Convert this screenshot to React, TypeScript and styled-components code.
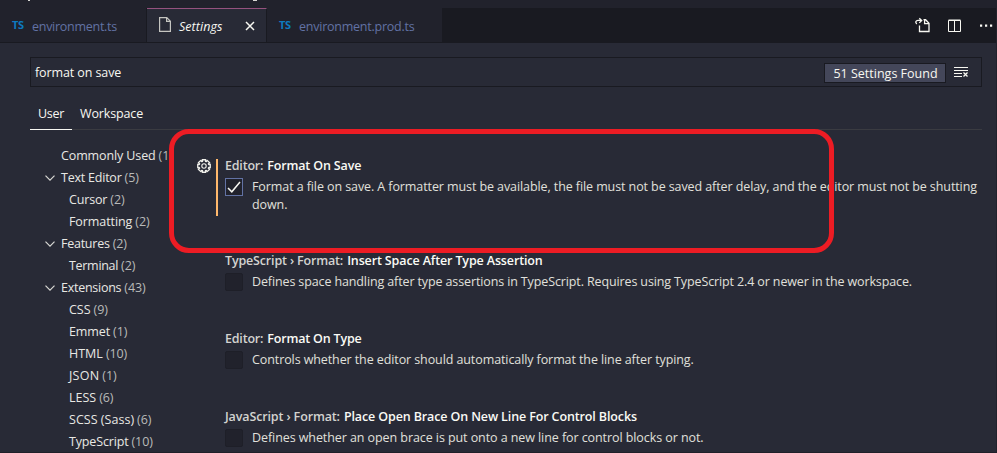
import React from "react";
import styled, { createGlobalStyle, css } from "styled-components";

const GlobalStyle = createGlobalStyle`
  * { box-sizing: border-box; }
  body { margin: 0; background: #282a36; overflow: hidden; }
`;

const Window = styled.div`
  position: relative;
  display: flex;
  flex-direction: column;
  width: 997px;
  height: 453px;
  overflow: hidden;
  background: #282a36;
  border-right: 1px solid #21222c;
  border-bottom: 1px solid #1f2029;
  color: #f8f8f2;
  font: 12.5px/18px "Open Sans", "Noto Sans", sans-serif;
  font-kerning: normal;
`;

const Label = styled.span<{ $track?: number }>`
  letter-spacing: ${(p) => p.$track ?? -0.12}px;
  white-space: nowrap;
`;

const TitleBar = styled.header`
  display: flex;
  height: 8px;
  padding-left: 28px;
  background: #21222c;
`;

const MenuDescender = styled.i<{ $width: number; $gap?: number }>`
  width: ${(p) => p.$width}px;
  height: 1px;
  margin-left: ${(p) => p.$gap ?? 0}px;
  background: #d8d8d4;
`;

const TabBar = styled.nav`
  display: flex;
  height: 35px;
  background: #191a21;
`;

const Tab = styled.div<{ $width: number; $active?: boolean; $last?: boolean }>`
  display: flex;
  align-items: center;
  width: ${(p) => p.$width}px;
  padding: 4px 0 0 12px;
  border-right: ${(p) => (p.$last ? 0 : 1)}px solid #191a21;
  border-bottom: 1px solid #191a21;
  background: #21222c;
  color: #6272a4;
  ${(p) =>
    p.$active &&
    css`
      padding-top: 3px;
      border-top: 1px solid #94527e;
      background: #282a36;
      color: #f8f8f2;
      font-style: italic;
    `}
`;

const TsBadge = styled.span`
  width: 20px;
  margin-top: -4px;
  color: #0d7ac0;
  font: 700 11px/12px "Open Sans", sans-serif;
  letter-spacing: -0.4px;
`;

const FileIcon = styled.svg`
  width: 12px;
  height: 15px;
  margin: -5px 8px 0 0;
`;

const CloseIcon = styled.svg`
  width: 10px;
  height: 10px;
  margin: -3px 0 0 auto;
`;

const ActiveInner = styled.div`
  display: flex;
  flex: 1;
  align-items: center;
  padding-right: 11px;
`;

const Actions = styled.div`
  display: flex;
  align-items: center;
  gap: 18px;
  margin-left: auto;
  padding-right: 3px;
`;

const Icon = styled.svg`
  display: block;
  flex: none;
  overflow: visible;
`;

const SearchBox = styled.div`
  display: flex;
  align-items: center;
  height: 30px;
  margin: 14px 14px 0 30px;
  padding: 2px 12px 0 4px;
  border: 1px solid #191a21;
`;

const Count = styled.div`
  display: flex;
  align-items: center;
  justify-content: center;
  width: 122px;
  height: 20px;
  margin: 0 8px 0 auto;
  padding: 2px 0 0 1px;
  border: 1px solid #191a21;
  background: #44475a;
`;

const ClearIcon = styled(Icon)`
  margin-top: -3px;
`;

const ScopeTabs = styled.div`
  display: flex;
  height: 30px;
  margin: 13px 14px 0 30px;
  border-bottom: 1px solid #3a3b41;
`;

const ScopeTab = styled.div<{ $active?: boolean }>`
  height: 30px;
  padding: 5px 8px 0;
  border-bottom: 1px solid ${(p) => (p.$active ? "#f8f8f2" : "transparent")};
`;

const Body = styled.main`
  display: flex;
  flex: 1;
  min-height: 0;
`;

const Tree = styled.aside`
  width: 172px;
  padding-top: 14px;
  overflow: hidden;
`;

const TreeRow = styled.div<{ $child?: boolean }>`
  display: flex;
  align-items: center;
  height: 22px;
  padding: 1px 0 0 ${(p) => (p.$child ? 69 : 45)}px;
  color: #e8e8e4;
`;

const Twistie = styled.span`
  display: flex;
  flex: none;
  width: 16px;
`;

const TreeCount = styled.span`
  padding-left: 3px;
  color: #b9bab9;
  letter-spacing: -0.1px;
`;

const List = styled.section`
  flex: 1;
  padding: 29px 0 0 24px;
`;

const Setting = styled.article<{ $height: number }>`
  display: grid;
  grid-template-columns: 20px 9px 760px;
  height: ${(p) => p.$height}px;
`;

const GearCell = styled.div`
  padding-left: 1px;
`;

const ModifiedBar = styled.div<{ $on?: boolean }>`
  width: 2px;
  height: 57px;
  background: ${(p) => (p.$on ? "#ffb86c" : "transparent")};
`;

const Heading = styled.h3`
  display: flex;
  gap: 4px;
  margin: -2px 0 0;
  height: 21px;
  font-size: 12.5px;
  font-weight: 600;
  line-height: 18px;
  color: #fafaf5;
`;

const Category = styled(Label)`
  color: #d3d3d0;
`;

const Option = styled.div`
  display: flex;
  gap: 9px;
`;

const Check = styled.span<{ $checked?: boolean }>`
  display: flex;
  align-items: center;
  justify-content: center;
  flex: none;
  width: 18px;
  height: 18px;
  border: 1px solid ${(p) => (p.$checked ? "#6272a4" : "#1e1f28")};
  border-radius: ${(p) => (p.$checked ? 0 : 2)}px;
  background: #21222c;
`;

const Description = styled.p`
  display: flex;
  flex-direction: column;
  margin: 0;
  color: #e0e0dc;
`;

const Highlight = styled.div`
  position: absolute;
  left: 169px;
  top: 129px;
  width: 665px;
  height: 124px;
  border: 5px solid #ed1c24;
  border-radius: 20px;
`;

type TreeItem = [name: string, count: string, track: number, kind: "top" | "open" | "child"];

const tree: TreeItem[] = [
  ["Commonly Used", "(1", -0.12, "top"],
  ["Text Editor", "(5)", -0.22, "open"],
  ["Cursor", "(2)", -0.15, "child"],
  ["Formatting", "(2)", -0.08, "child"],
  ["Features", "(2)", -0.25, "open"],
  ["Terminal", "(2)", -0.3, "child"],
  ["Extensions", "(43)", -0.26, "open"],
  ["CSS", "(9)", 0, "child"],
  ["Emmet", "(1)", -0.1, "child"],
  ["HTML", "(10)", 0, "child"],
  ["JSON", "(1)", 0.25, "child"],
  ["LESS", "(6)", 0, "child"],
  ["SCSS (Sass)", "(6)", 0.03, "child"],
  ["TypeScript", "(10)", -0.15, "child"],
];

interface SettingData {
  category: string;
  name: string;
  lines: string[];
  height: number;
  tracks: [number, number, number];
  checked?: boolean;
}

const settings: SettingData[] = [
  {
    category: "Editor:",
    name: "Format On Save",
    lines: [
      "Format a file on save. A formatter must be available, the file must not be saved after delay, and the editor must not be shutting",
      "down.",
    ],
    height: 95,
    tracks: [-0.2, -0.15, -0.091],
    checked: true,
  },
  {
    category: "TypeScript › Format:",
    name: "Insert Space After Type Assertion",
    lines: [
      "Defines space handling after type assertions in TypeScript. Requires using TypeScript 2.4 or newer in the workspace.",
    ],
    height: 78,
    tracks: [-0.16, -0.13, -0.123],
  },
  {
    category: "Editor:",
    name: "Format On Type",
    lines: ["Controls whether the editor should automatically format the line after typing."],
    height: 78,
    tracks: [-0.2, -0.18, -0.095],
  },
  {
    category: "JavaScript › Format:",
    name: "Place Open Brace On New Line For Control Blocks",
    lines: ["Defines whether an open brace is put onto a new line for control blocks or not."],
    height: 60,
    tracks: [-0.13, -0.121, -0.077],
  },
];

// Outline of an eight-toothed cog, two points on each tooth and two in each notch.
const cogPath =
  Array.from({ length: 8 }, (_, i) =>
    [
      [-0.27, 6.5],
      [0.27, 6.5],
      [0.3, 4.9],
      [0.49, 4.9],
    ].map(([offset, radius]) => {
      const angle = (i * Math.PI) / 4 + offset;
      return `${(7 + radius * Math.sin(angle)).toFixed(2)} ${(7 - radius * Math.cos(angle)).toFixed(2)}`;
    }),
  )
    .flat()
    .reduce((d, point, i) => d + (i === 0 ? "M" : "L") + point, "") + "Z";

function Gear() {
  return (
    <Icon width="14" height="14" viewBox="0 0 14 14" fill="none" stroke="#f0f0eb" strokeLinejoin="round">
      <path d={cogPath} strokeWidth="1.3" />
      <circle cx="7" cy="7" r="2.2" strokeWidth="1.1" />
    </Icon>
  );
}

export default function App() {
  return (
    <>
      <GlobalStyle />
      <Window>
        <TitleBar>
          <MenuDescender $width={2} />
          <MenuDescender $width={4} $gap={223} />
        </TitleBar>
        <TabBar>
          <Tab $width={147}>
            <TsBadge>TS</TsBadge>
            <Label $track={-0.271}>environment.ts</Label>
          </Tab>
          <Tab $width={120} $active>
            <ActiveInner>
              <FileIcon viewBox="0 0 12 15" fill="none" stroke="#c5c5c1" strokeWidth="1.2">
                <path d="M.6.6h7.2l3.6 3.6v10.200H.6zM7.600.6v3.800h3.800" />
              </FileIcon>
              <Label $track={0.05}>Settings</Label>
              <CloseIcon viewBox="0 0 10 10" stroke="#f8f8f2" strokeWidth="1.5">
                <path d="M1 1l8 8M9 1L1 9" />
              </CloseIcon>
            </ActiveInner>
          </Tab>
          <Tab $width={175} $last>
            <TsBadge>TS</TsBadge>
            <Label $track={-0.237}>environment.prod.ts</Label>
          </Tab>
          <Actions>
            <Icon width="15" height="15" viewBox="0 0 15 15" fill="none" stroke="#f8f8f2" strokeWidth="1.3">
              <path d="M4.500 7.500v6h9.500V5.200L10.600 1.700H8.500M9.600 1.700v4H14" />
              <path d="M1.800 6C-.2 4.200 1 2.400 3 2.400h3.500M4.300.2L6.700 2.500 4.300 4.900" />
            </Icon>
            <Icon width="14" height="14" viewBox="0 0 14 14" fill="none" stroke="#f8f8f2">
              <path d="M.5 1.500h12v11H.5zM6.500 1.500v11" />
              <path d="M.5 1h12" />
            </Icon>
            <Icon width="13" height="3" viewBox="0 0 13 3" fill="#f8f8f2">
              <path d="M0 .5h2.200v2.200H0zM5 .5h2.200v2.200H5zM10 .5h2.200v2.200H10z" />
            </Icon>
          </Actions>
        </TabBar>

        <SearchBox>
          <Label $track={-0.1}>format on save</Label>
          <Count>
            <Label $track={0}>51 Settings Found</Label>
          </Count>
          <ClearIcon width="15" height="12" viewBox="0 0 15 12" fill="none" stroke="#f8f8f2">
            <path d="M0 1.500h14M0 4.500h14M0 7.500h8M0 10.500h8" />
            <path d="M9.500 6.500l4 4M13.500 6.500l-4 4" strokeWidth="1.3" />
          </ClearIcon>
        </SearchBox>

        <ScopeTabs>
          <ScopeTab $active>
            <Label $track={-0.299}>User</Label>
          </ScopeTab>
          <ScopeTab>
            <Label $track={-0.144}>Workspace</Label>
          </ScopeTab>
        </ScopeTabs>

        <Body>
          <Tree>
            {tree.map(([name, count, track, kind]) => (
              <TreeRow key={name} $child={kind === "child"}>
                {kind !== "child" && (
                  <Twistie>
                    {kind === "open" && (
                      <Icon width="10" height="6" viewBox="0 0 10 6" fill="none" stroke="#d8d8d4" strokeWidth="1.2">
                        <path d="M.5.6L5 5.100 9.500.6" />
                      </Icon>
                    )}
                  </Twistie>
                )}
                <Label $track={track}>{name}</Label>
                <TreeCount>{count}</TreeCount>
              </TreeRow>
            ))}
          </Tree>
          <List>
            {settings.map((s) => (
              <Setting key={s.name} $height={s.height}>
                <GearCell>{s.checked && <Gear />}</GearCell>
                <ModifiedBar $on={s.checked} />
                <div>
                  <Heading>
                    <Category $track={s.tracks[0]}>{s.category}</Category>
                    <Label $track={s.tracks[1]}>{s.name}</Label>
                  </Heading>
                  <Option>
                    <Check $checked={s.checked}>
                      {s.checked && (
                        <Icon width="14" height="12" viewBox="0 0 14 12" fill="none" stroke="#f8f8f2" strokeWidth="1.5">
                          <path d="M1 7L4.800 10.800 13 1" />
                        </Icon>
                      )}
                    </Check>
                    <Description>
                      {s.lines.map((line) => (
                        <Label key={line} $track={s.tracks[2]}>
                          {line}
                        </Label>
                      ))}
                    </Description>
                  </Option>
                </div>
              </Setting>
            ))}
          </List>
        </Body>
        <Highlight />
      </Window>
    </>
  );
}
